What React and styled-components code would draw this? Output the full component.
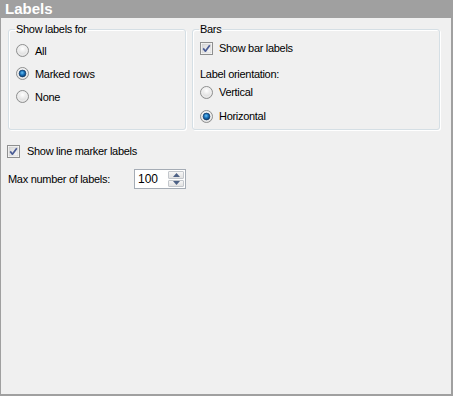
import React from 'react';
import styled, { createGlobalStyle } from 'styled-components';

const GlobalStyle = createGlobalStyle`
  html, body {
    margin: 0;
    padding: 0;
    background: #ffffff;
  }
`;

function Radio({ checked }) {
  return (
    <svg width="13" height="13" viewBox="0 0 13 13">
      <defs>
        <radialGradient id="rbg" cx="0.5" cy="0.35" r="0.7">
          <stop offset="0%" stopColor="#ffffff" />
          <stop offset="100%" stopColor="#d0d0d0" />
        </radialGradient>
        <radialGradient id="rdot" cx="0.45" cy="0.4" r="0.6">
          <stop offset="0%" stopColor="#6cc4f4" />
          <stop offset="50%" stopColor="#1b74bd" />
          <stop offset="100%" stopColor="#0a3c6e" />
        </radialGradient>
      </defs>
      <circle cx="6.5" cy="6.5" r="6" fill="url(#rbg)" stroke="#8e8f8f" strokeWidth="1" />
      <circle cx="6.5" cy="6.5" r="4.6" fill="none" stroke="#f4f4f4" strokeWidth="0.8" />
      {checked && <circle cx="6.5" cy="6.5" r="3.4" fill="url(#rdot)" stroke="#123a66" strokeWidth="0.7" />}
    </svg>
  );
}

function Check({ checked }) {
  return (
    <svg width="13" height="13" viewBox="0 0 13 13">
      <defs>
        <linearGradient id="cbg" x1="0" y1="0" x2="1" y2="1">
          <stop offset="0%" stopColor="#d8d8d8" />
          <stop offset="100%" stopColor="#f8f8f8" />
        </linearGradient>
      </defs>
      <rect x="0.5" y="0.5" width="12" height="12" fill="#ffffff" stroke="#8e8f8f" />
      <rect x="2" y="2" width="9" height="9" fill="url(#cbg)" stroke="#c8c8c8" strokeWidth="0.6" />
      {checked && (
        <path d="M3.2 6.4 L5.4 9.2 L9.8 3.2" fill="none" stroke="#4a5c95" strokeWidth="1.7" strokeLinejoin="round" />
      )}
    </svg>
  );
}

function Spinner() {
  return (
    <SpinButtons>
      <SpinButton>
        <svg width="7" height="4" viewBox="0 0 7 4">
          <path d="M0 4 L3.5 0 L7 4 Z" fill="#4d6185" />
        </svg>
      </SpinButton>
      <SpinButton>
        <svg width="7" height="4" viewBox="0 0 7 4">
          <path d="M0 0 L3.5 4 L7 0 Z" fill="#4d6185" />
        </svg>
      </SpinButton>
    </SpinButtons>
  );
}

export default function App() {
  return (
    <>
      <GlobalStyle />
      <Panel>
        <Header>Labels</Header>
        <Body>
          <GroupRow>
            <Group $width={178}>
              <Legend>Show labels for</Legend>
              <OptionList $first={3}>
                <Option $h={23}>
                  <Radio />
                  <span>All</span>
                </Option>
                <Option $h={23}>
                  <Radio checked />
                  <span>Marked rows</span>
                </Option>
                <Option $h={23}>
                  <Radio />
                  <span>None</span>
                </Option>
              </OptionList>
            </Group>
            <Group $width={248}>
              <Legend>Bars</Legend>
              <OptionList $first={2}>
                <Option $h={20}>
                  <Check checked />
                  <span>Show bar labels</span>
                </Option>
                <Caption>Label orientation:</Caption>
                <Option $h={24}>
                  <Radio />
                  <span>Vertical</span>
                </Option>
                <Option $h={24}>
                  <Radio checked />
                  <span>Horizontal</span>
                </Option>
              </OptionList>
            </Group>
          </GroupRow>
          <LooseOption>
            <Check checked />
            <span>Show line marker labels</span>
          </LooseOption>
          <FieldRow>
            <FieldLabel>Max number of labels:</FieldLabel>
            <SpinBox>
              <SpinValue>100</SpinValue>
              <Spinner />
            </SpinBox>
          </FieldRow>
        </Body>
      </Panel>
    </>
  );
}

const Panel = styled.div`
  width: 453px;
  height: 396px;
  box-sizing: border-box;
  background: #f0f0f0;
  border-left: 1px solid #a0a0a0;
  border-right: 2px solid #a0a0a0;
  border-bottom: 2px solid #a0a0a0;
  font-family: 'Liberation Sans', Arial, sans-serif;
  font-size: 11px;
  letter-spacing: -0.3px;
  color: #000000;
  overflow: hidden;
`;

const Header = styled.div`
  height: 18px;
  margin-left: -1px;
  margin-right: -2px;
  padding-left: 5px;
  background: #a0a0a0;
  color: #ffffff;
  font-weight: bold;
  font-size: 15px;
  letter-spacing: 0;
  line-height: 18px;
`;

const Body = styled.div`
  padding: 4px 0 0 7px;
`;

const GroupRow = styled.div`
  display: flex;
  gap: 6px;
  align-items: flex-start;
`;

const Group = styled.fieldset`
  width: ${(p) => p.$width}px;
  height: 108px;
  box-sizing: border-box;
  margin: 0;
  padding: 0 0 0 7px;
  border: 1px solid #d5dfe5;
  border-radius: 3px;
  box-shadow: inset 1px 1px 0 #ffffff, 1px 1px 0 #ffffff;
  min-width: 0;
`;

const Legend = styled.legend`
  padding: 0 1px;
  margin-left: -1px;
  line-height: 14px;
  height: 14px;
`;

const OptionList = styled.div`
  display: flex;
  flex-direction: column;
  margin-top: ${(p) => p.$first}px;
`;

const Option = styled.label`
  display: flex;
  align-items: center;
  gap: 6px;
  height: ${(p) => p.$h}px;

  svg {
    flex: none;
  }
`;

const Caption = styled.div`
  margin-top: 10px;
  height: 12px;
  line-height: 12px;
`;

const LooseOption = styled(Option)`
  height: 20px;
  margin-top: 11px;
  margin-left: -1px;
  gap: 7px;
`;

const FieldRow = styled.div`
  display: flex;
  align-items: center;
  height: 20px;
  margin-top: 8px;
`;

const FieldLabel = styled.div`
  width: 126px;
`;

const SpinBox = styled.div`
  display: flex;
  align-items: stretch;
  width: 52px;
  height: 20px;
  box-sizing: border-box;
  border: 1px solid #a5acb5;
  background: #ffffff;
`;

const SpinValue = styled.div`
  flex: 1;
  padding-left: 3px;
  font-size: 12px;
  line-height: 18px;
  letter-spacing: 0;
`;

const SpinButtons = styled.div`
  display: flex;
  flex-direction: column;
  gap: 1px;
  padding: 1px 1px 1px 0;
  width: 16px;
`;

const SpinButton = styled.div`
  flex: 1;
  display: flex;
  align-items: center;
  justify-content: center;
  background: linear-gradient(#f6f6f6, #e2e2e2);
  border: 1px solid #c3c7cc;
  border-radius: 1px;
`;
